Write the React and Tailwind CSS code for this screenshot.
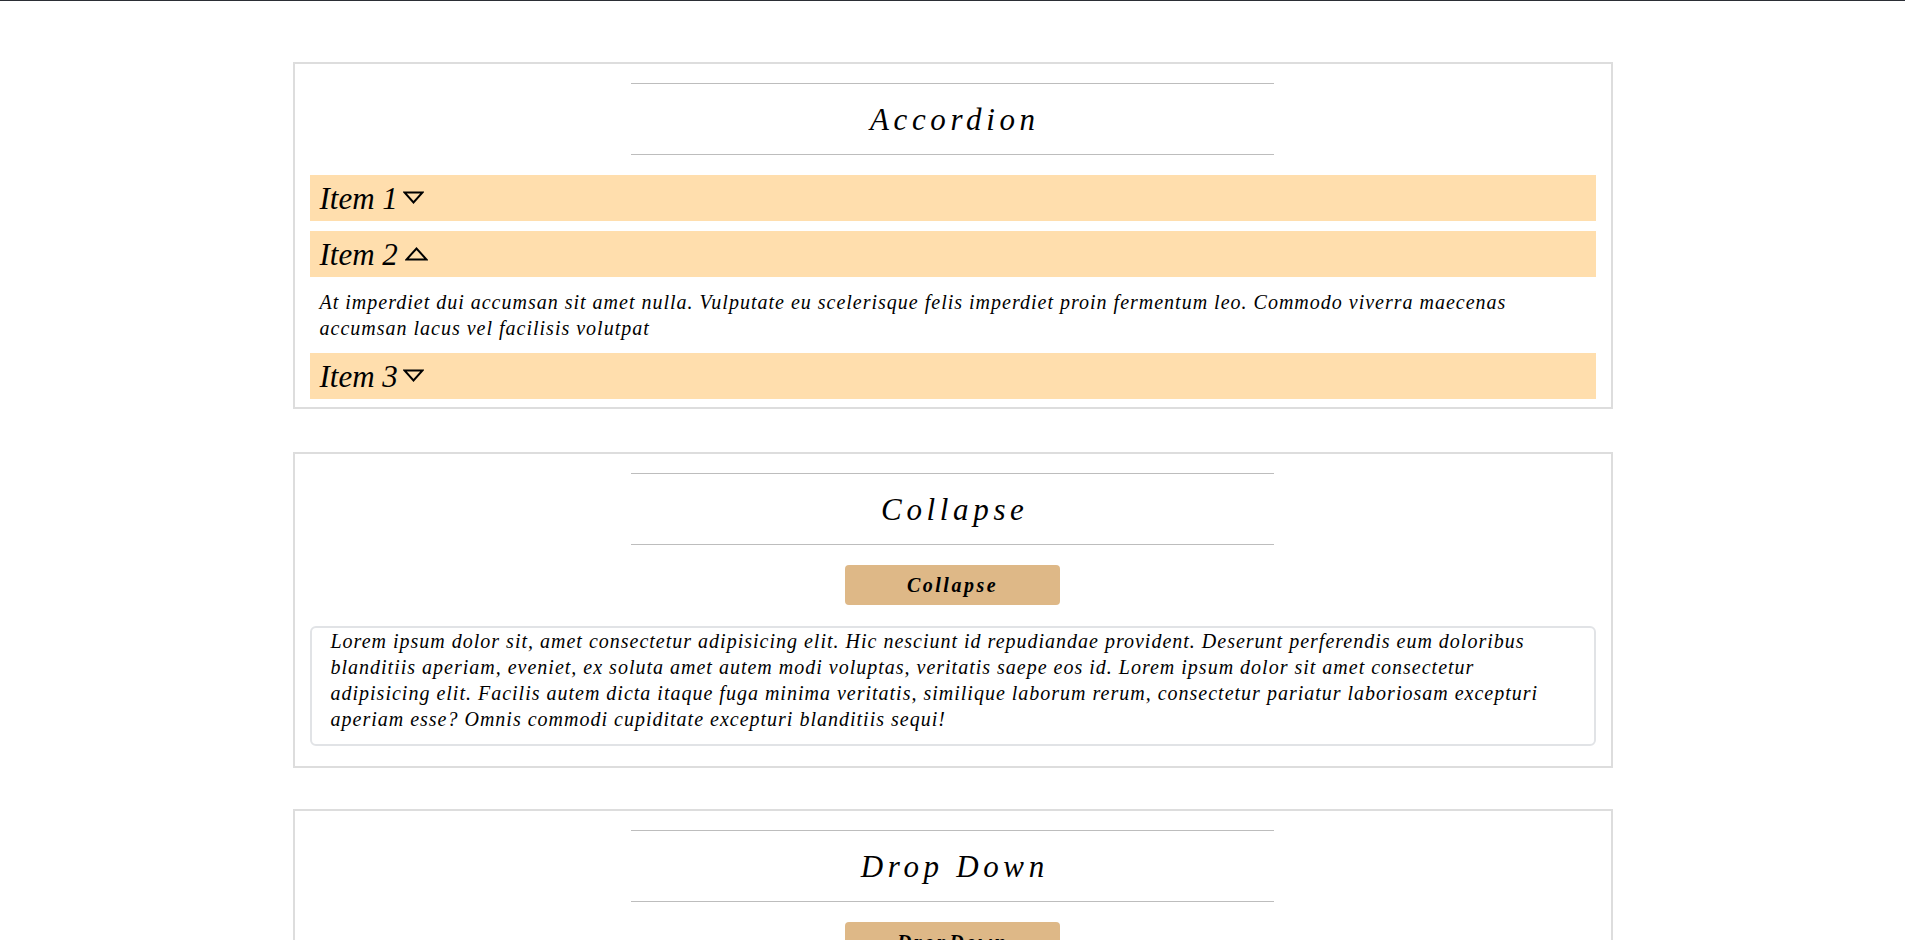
import React from "react";

const serif = "font-['Liberation_Serif',serif] italic";

function TriDown() {
  return (
    <svg width="21" height="13" viewBox="0 0 21 13" className="ml-[5px] mb-[2px]">
      <polygon points="1.5,1.5 19.5,1.5 10.5,11.5" fill="none" stroke="#000" strokeWidth="2" strokeLinejoin="miter" />
    </svg>
  );
}

function TriUp() {
  return (
    <svg width="23" height="14" viewBox="0 0 23 14" className="ml-[7px]">
      <polygon points="1.5,12.5 21.5,12.5 11.5,1.5" fill="none" stroke="#000" strokeWidth="2" strokeLinejoin="miter" />
    </svg>
  );
}

function Title({ children }) {
  return (
    <div className="mx-auto w-1/2 h-[72px] border-y border-[#bdbdbd] flex items-center justify-center">
      <h2 className={`${serif} text-[31px] tracking-[0.15em] text-black font-normal leading-none pl-[0.15em]`}>{children}</h2>
    </div>
  );
}

function Card({ children, className = "" }) {
  return (
    <section className={`w-[1320px] border-2 border-[#dddddd] px-[15px] pt-[19px] ${className}`}>
      {children}
    </section>
  );
}

function Bar({ label, open, last }) {
  return (
    <div className={`h-[46px] bg-[#ffdead] px-[10px] flex items-center ${last ? "mb-[8px]" : "mb-[10px]"}`}>
      <span className={`${serif} text-[31px] leading-none text-black`}>{label}</span>
      {open ? <TriUp /> : <TriDown />}
    </div>
  );
}

function Btn({ children }) {
  return (
    <div className="flex justify-center">
      <button className={`w-[215px] h-[40px] rounded-[4px] bg-[#deb887] ${serif} font-bold text-[20px] tracking-[2.5px] text-black`}>
        {children}
      </button>
    </div>
  );
}

export default function App() {
  return (
    <div className="min-h-screen bg-white">
      <div className="h-px bg-[#2b2e35]" />
      <main className="pt-[61px] pb-[40px] flex flex-col items-center">
        <Card className="pb-0 mb-[43px]">
          <Title>Accordion</Title>
          <div className="mt-[20px]">
            <Bar label="Item 1" />
            <Bar label="Item 2" open />
            <p className={`${serif} text-[20px] leading-[26px] tracking-[1px] text-black px-[10px] pt-[2px] pb-[12px]`}>
              At imperdiet dui accumsan sit amet nulla. Vulputate eu scelerisque felis imperdiet proin fermentum leo. Commodo viverra maecenas accumsan lacus vel facilisis volutpat
            </p>
            <Bar label="Item 3" last />
          </div>
        </Card>

        <Card className="pb-[20px] mb-[41px]">
          <Title>Collapse</Title>
          <div className="mt-[20px]">
            <Btn>Collapse</Btn>
          </div>
          <div className="mt-[21px] border-2 border-[#e1e3e6] rounded-[6px] pl-[19px] pr-[19px] pt-0 pb-[12px]">
            <p className={`${serif} text-[20px] leading-[26px] tracking-[1px] text-black`}>
              Lorem ipsum dolor sit, amet consectetur adipisicing elit. Hic nesciunt id repudiandae provident. Deserunt perferendis eum doloribus blanditiis aperiam, eveniet, ex soluta amet autem modi voluptas, veritatis saepe eos id. Lorem ipsum dolor sit amet consectetur adipisicing elit. Facilis autem dicta itaque fuga minima veritatis, similique laborum rerum, consectetur pariatur laboriosam excepturi aperiam esse? Omnis commodi cupiditate excepturi blanditiis sequi!
            </p>
          </div>
        </Card>

        <Card className="pb-[20px]">
          <Title>Drop Down</Title>
          <div className="mt-[20px]">
            <Btn>DropDown</Btn>
          </div>
          <div className="h-[120px]" />
        </Card>
      </main>
    </div>
  );
}
